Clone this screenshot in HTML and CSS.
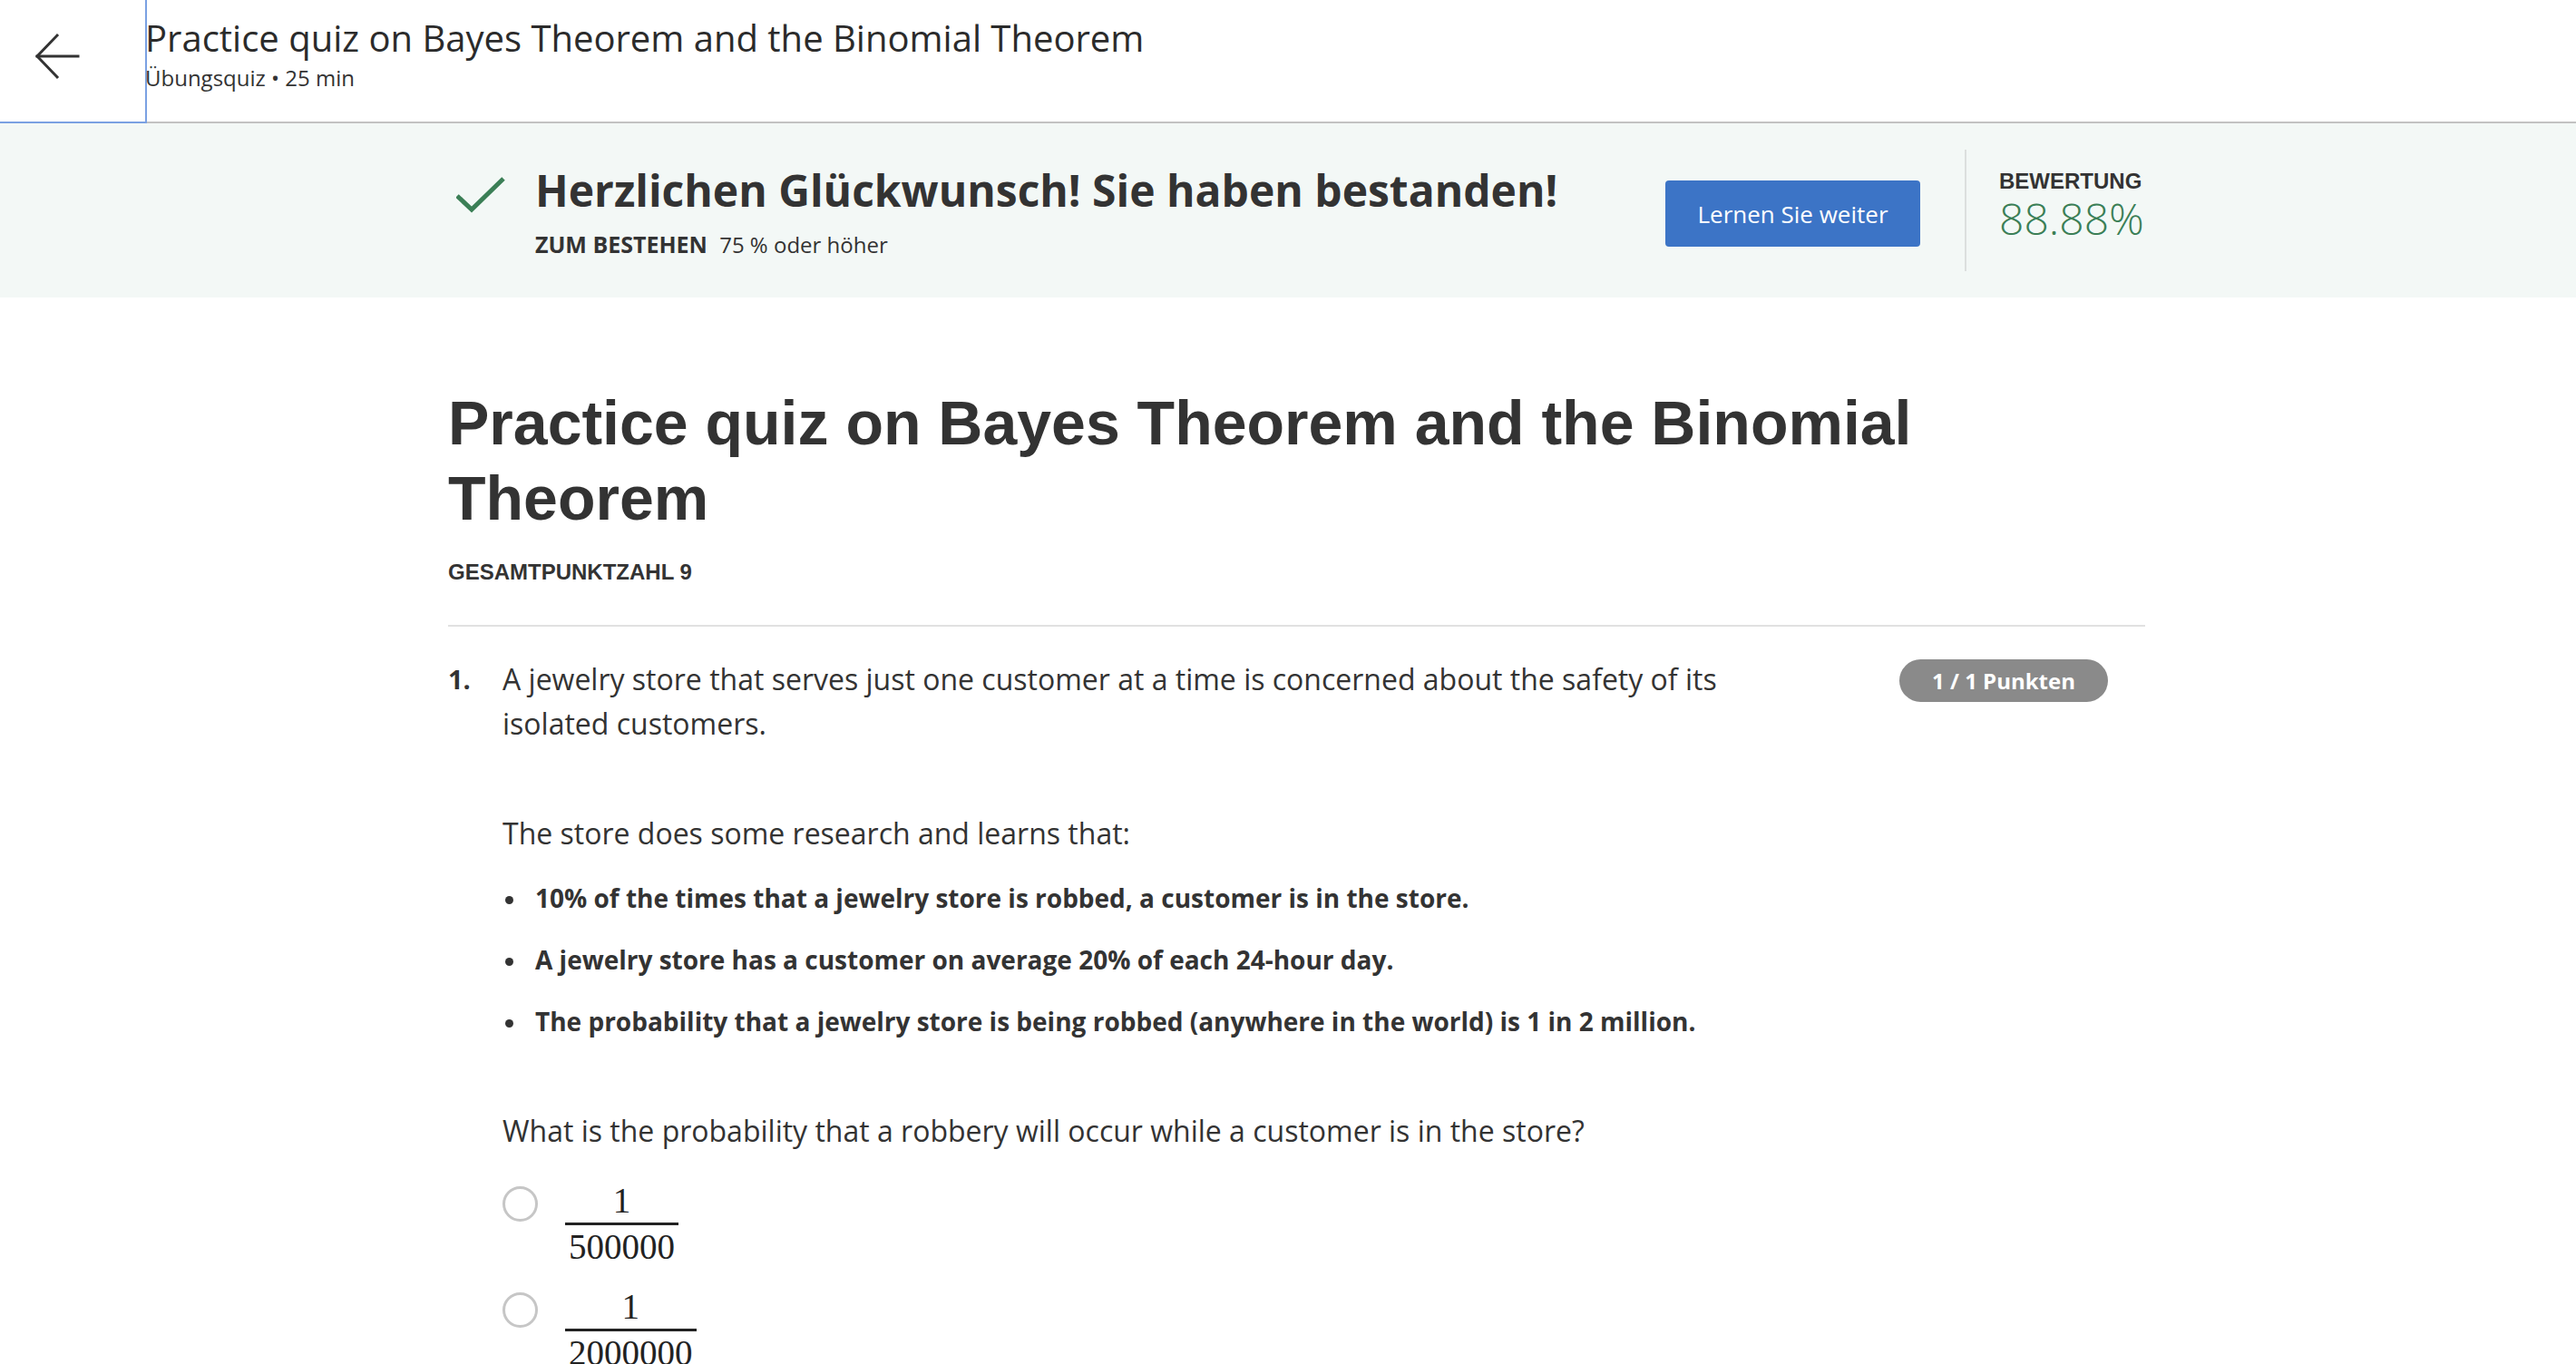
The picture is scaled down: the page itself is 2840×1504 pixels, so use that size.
FILE: index.html
```html
<!DOCTYPE html>
<html lang="de">
<head>
<meta charset="utf-8">
<title>Practice quiz on Bayes Theorem and the Binomial Theorem</title>
<link rel="stylesheet" href="styles.css">
</head>
<body>
<header class="topbar">
  <button class="back" aria-label="Zurück">
    <svg width="90" height="90" viewBox="0 0 90 90" fill="none" stroke="#333" stroke-width="3" stroke-linecap="square">
      <path d="M88 62 H43"/>
      <path d="M65 39 L43 62 L65 85"/>
    </svg>
  </button>
  <div class="topbar-text">
    <div class="topbar-title">Practice quiz on Bayes Theorem and the Binomial Theorem</div>
    <div class="topbar-sub">Übungsquiz • 25 min</div>
  </div>
</header>

<section class="banner">
  <div class="container banner-inner">
    <div class="banner-main">
      <svg class="check" width="56" height="44" viewBox="0 0 56 44" fill="none" stroke="#3b7f56" stroke-width="5">
        <path d="M1 21 L17 36 L52 2"/>
      </svg>
      <div class="banner-text">
        <div class="banner-title">Herzlichen Glückwunsch! Sie haben bestanden!</div>
        <div class="banner-sub"><span class="label">ZUM BESTEHEN</span> 75 % oder höher</div>
      </div>
    </div>
    <button class="btn-primary">Lernen Sie weiter</button>
    <div class="vdivider"></div>
    <div class="score">
      <div class="score-label">BEWERTUNG</div>
      <div class="score-value">88.88%</div>
    </div>
  </div>
</section>

<main class="container content">
  <h1 class="quiz-title">Practice quiz on Bayes Theorem and the Binomial Theorem</h1>
  <div class="total">GESAMTPUNKTZAHL 9</div>
  <hr class="rule">

  <div class="question">
    <div class="q-num">1.</div>
    <div class="q-body">
      <p class="q-text">A jewelry store that serves just one customer at a time is concerned about the safety of its isolated customers.</p>
      <p class="q-text q-para">The store does some research and learns that:</p>
      <ul class="facts">
        <li>10% of the times that a jewelry store is robbed, a customer is in the store.</li>
        <li>A jewelry store has a customer on average 20% of each 24-hour day.</li>
        <li>The probability that a jewelry store is being robbed (anywhere in the world) is 1 in 2 million.</li>
      </ul>
      <p class="q-text q-ask">What is the probability that a robbery will occur while a customer is in the store?</p>
      <div class="options">
        <label class="option">
          <span class="radio"></span>
          <span class="frac"><span class="num">1</span><span class="bar"></span><span class="den">500000</span></span>
        </label>
        <label class="option">
          <span class="radio"></span>
          <span class="frac"><span class="num">1</span><span class="bar"></span><span class="den">2000000</span></span>
        </label>
      </div>
    </div>
    <div class="q-side">
      <span class="badge">1 / 1 Punkten</span>
    </div>
  </div>
</main>
</body>
</html>
```
FILE: styles.css
```css
html, body {
  margin: 0;
  padding: 0;
  background: #fff;
}
body {
  font-family: "Open Sans", "Noto Sans", sans-serif;
  color: #333;
}

/* top bar */
.topbar {
  display: flex;
  align-items: flex-start;
  height: 134px;
  border-bottom: 2px solid #c2c2c2;
}
.back {
  width: 162px;
  height: 136px;
  flex: none;
  margin: 0;
  padding: 0;
  background: #fff;
  border: none;
  border-right: 2px solid #7aa1e2;
  border-bottom: 2px solid #7aa1e2;
  box-sizing: border-box;
  display: flex;
  align-items: flex-start;
  justify-content: flex-start;
}
.back svg {
  display: block;
  margin: 0 0 0 -2px;
}
.topbar-text {
  margin-left: -2px;
  padding-top: 14px;
}
.topbar-title {
  font-size: 40px;
  color: #2b2b2b;
  line-height: normal;
}
.topbar-sub {
  font-size: 24px;
  color: #333;
  line-height: normal;
}

/* banner */
.banner {
  background: #f3f8f6;
}
.container {
  width: 1871px;
  margin-left: 494px;
}
.banner-inner {
  display: flex;
  align-items: center;
  height: 192px;
}
.banner-main {
  flex: 1;
  display: flex;
  align-items: flex-start;
}
.check {
  margin-left: 9px;
  margin-top: 16px;
  flex: none;
}
.banner-text {
  margin-left: 31px;
}
.banner-title {
  font-size: 48px;
  font-weight: 700;
  color: #333;
  line-height: normal;
  margin-top: -2px;
}
.banner-sub {
  margin-top: 11px;
  font-size: 24px;
  line-height: 32px;
  color: #333;
}
.banner-sub .label {
  font-weight: 700;
  font-size: 25px;
  margin-right: 7px;
}
.btn-primary {
  flex: none;
  width: 281px;
  height: 73px;
  margin-top: 7px;
  background: #3c74c6;
  color: #fff;
  border: none;
  border-radius: 4px;
  font-family: "Open Sans", sans-serif;
  font-size: 26px;
  padding: 0;
}
.vdivider {
  flex: none;
  width: 2px;
  height: 134px;
  background: #dcdfde;
  margin: 0 36px 0 49px;
}
.score {
  flex: none;
  width: 161px;
  align-self: flex-start;
  margin-top: 52px;
}
.score-label {
  font-family: "Liberation Sans", Arial, sans-serif;
  font-weight: 700;
  font-size: 24px;
  color: #333;
  line-height: 24px;
}
.score-value {
  font-size: 48px;
  font-weight: 300;
  color: #3b7f56;
  line-height: 58px;
  white-space: nowrap;
}

/* content */
.content {
  padding-top: 97px;
}
.quiz-title {
  margin: 0;
  font-family: "Liberation Sans", Arial, sans-serif;
  font-weight: 700;
  font-size: 68px;
  line-height: 83px;
  color: #333;
}
.total {
  margin-top: 26px;
  font-family: "Liberation Sans", Arial, sans-serif;
  font-weight: 700;
  font-size: 24px;
  color: #333;
  line-height: normal;
}
.rule {
  margin: 44px 0 0;
  border: none;
  height: 2px;
  background: #e1e1e1;
}
.question {
  display: flex;
  align-items: flex-start;
  margin-top: 33px;
}
.q-num {
  width: 60px;
  flex: none;
  font-size: 29px;
  font-weight: 700;
  line-height: 49px;
}
.q-body {
  flex: 1;
  min-width: 0;
}
.q-side {
  width: 391px;
  flex: none;
  display: flex;
  justify-content: flex-end;
  padding-right: 41px;
  box-sizing: border-box;
  padding-top: 3px;
}
.q-text {
  margin: 0;
  font-size: 32px;
  line-height: 49px;
  color: #333;
}
.q-para {
  margin-top: 72px;
}
.facts {
  margin: 25px 0 0;
  padding: 0;
  list-style: none;
}
.facts li {
  display: flex;
  align-items: flex-start;
  font-size: 28px;
  font-weight: 700;
  line-height: 44px;
  margin-bottom: 24px;
  color: #333;
}
.facts li::before {
  content: "";
  flex: none;
  width: 9px;
  height: 9px;
  border-radius: 50%;
  background: #333;
  margin: 20px 24px 0 3px;
}
.facts li:last-child {
  margin-bottom: 0;
}
.q-ask {
  margin-top: 74px;
}
.badge {
  display: inline-flex;
  align-items: center;
  justify-content: center;
  width: 230px;
  height: 47px;
  border-radius: 24px;
  background: #8a8a8a;
  color: #fff;
  font-size: 24px;
  font-weight: 700;
}

/* options */
.options {
  margin-top: 29px;
}
.option {
  display: flex;
  align-items: flex-start;
  margin-bottom: 20px;
}
.radio {
  flex: none;
  width: 39px;
  height: 39px;
  margin-top: 8px;
  border: 3px solid #c6c6c6;
  border-radius: 50%;
  box-sizing: border-box;
}
.frac {
  display: inline-flex;
  flex-direction: column;
  align-items: center;
  margin-left: 30px;
  font-family: "Liberation Serif", "Times New Roman", serif;
  font-size: 39px;
  color: #222;
}
.num {
  line-height: 48px;
}
.bar {
  align-self: stretch;
  height: 3px;
  background: #222;
}
.den {
  padding: 2px 4px 0;
  line-height: 44px;
}
```
